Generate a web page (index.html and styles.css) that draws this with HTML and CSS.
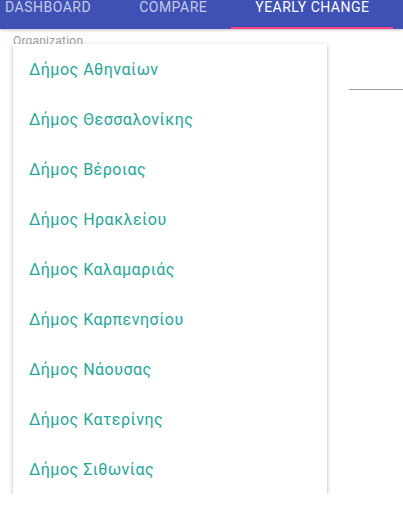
FILE: index.html
```html
<!DOCTYPE html>
<html lang="el">
<head>
<meta charset="utf-8">
<link rel="stylesheet" href="styles.css">
</head>
<body>
<nav class="tabbar">
  <div class="tabs">
    <div class="tab">DASHBOARD</div>
    <div class="tab">COMPARE</div>
    <div class="tab active">YEARLY CHANGE</div>
  </div>
</nav>
<main class="content">
  <div class="field">
    <label class="label">Organization</label>
    <ul class="menu">
      <li class="item">Δήμος Αθηναίων</li>
      <li class="item">Δήμος Θεσσαλονίκης</li>
      <li class="item">Δήμος Βέροιας</li>
      <li class="item">Δήμος Ηρακλείου</li>
      <li class="item">Δήμος Καλαμαριάς</li>
      <li class="item">Δήμος Καρπενησίου</li>
      <li class="item">Δήμος Νάουσας</li>
      <li class="item">Δήμος Κατερίνης</li>
      <li class="item">Δήμος Σιθωνίας</li>
    </ul>
  </div>
  <div class="side">
    <div class="underline"></div>
  </div>
</main>
</body>
</html>
```
FILE: styles.css
```css
html, body {
  margin: 0;
  padding: 0;
  background: #ffffff;
  font-family: Roboto, "Noto Sans", sans-serif;
  overflow: hidden;
}
.tabbar {
  height: 29px;
  background: #3f51b5;
  box-shadow: 0 1px 3px rgba(0,0,0,0.25);
  overflow: hidden;
  position: relative;
  z-index: 2;
}
.tabs {
  display: flex;
  margin-left: -19px;
  height: 29px;
}
.tab {
  padding: 0 24px;
  height: 29px;
  box-sizing: border-box;
  font-size: 14px;
  line-height: 14px;
  letter-spacing: 0.5px;
  color: rgba(255,255,255,0.7);
  white-space: nowrap;
}
.tab.active {
  color: #ffffff;
  border-bottom: 2px solid #ff4081;
}
.content {
  display: flex;
}
.field {
  margin-left: 13px;
  width: 314px;
  flex: none;
  padding-top: 6px;
}
.label {
  display: block;
  font-size: 12px;
  line-height: 12px;
  letter-spacing: 0.2px;
  color: #9e9e9e;
  height: 9px;
}
.menu {
  list-style: none;
  margin: 0;
  padding: 0;
  background: #ffffff;
  position: relative;
  box-shadow: 0 2px 2px 0 rgba(0,0,0,0.14), 0 3px 1px -2px rgba(0,0,0,0.12), 0 1px 5px 0 rgba(0,0,0,0.2);
}
.item {
  height: 50px;
  box-sizing: border-box;
  padding: 15px 16px 13px;
  font-size: 16px;
  line-height: 22px;
  letter-spacing: 0.5px;
  color: #26a69a;
}
.side {
  flex: 1;
  padding-left: 22px;
  padding-top: 60px;
}
.underline {
  height: 1px;
  background: #9e9e9e;
}
```
